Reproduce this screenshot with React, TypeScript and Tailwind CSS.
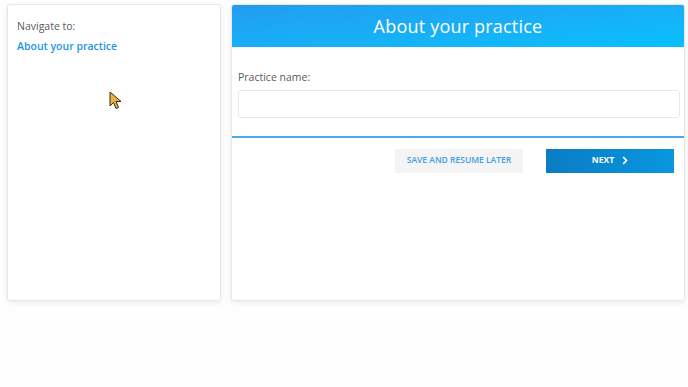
export default function App() {
  return (
    <div className="relative h-[387px] w-[688px] bg-[#fefefe] font-['Open_Sans',sans-serif]">
      <div className="flex gap-[10px] pl-[7px] pt-[4px]">
        <aside className="h-[297px] w-[214px] rounded-[3px] border border-[#e6e6e6] bg-white px-[9px] pt-[14px] shadow-[0_2px_6px_rgba(0,0,0,0.08)]">
          <p className="text-[10.5px] text-[#5a5a5a]">Navigate to:</p>
          <a className="mt-[4px] block text-[10.5px] font-semibold text-[#2196e8]">About your practice</a>
        </aside>

        <main className="h-[297px] w-[454px] overflow-hidden rounded-[3px] border border-[#e6e6e6] bg-white shadow-[0_2px_6px_rgba(0,0,0,0.08)]">
          <header className="flex h-[42px] items-center justify-center bg-gradient-to-br from-[#229cf0] to-[#05c0fd]">
            <h1 className="text-[18px] tracking-[0.2px] text-white">About your practice</h1>
          </header>

          <section className="pl-[6px] pr-[4px] pt-[23px] pb-[18px]">
            <label className="block text-[10.5px] text-[#5a5a5a]">Practice name:</label>
            <input className="mt-[4px] h-[28px] w-full rounded-[3px] border border-[#e8e8e8] bg-white" />
          </section>

          <div className="h-[2px] bg-[#48a9ec]" />

          <div className="flex justify-end gap-[23px] pr-[10px] pt-[11px]">
            <button className="h-[24px] w-[128px] bg-[#f4f4f4] text-[8.5px] font-semibold text-[#3d9ee6]">
              SAVE AND RESUME LATER
            </button>
            <button className="flex h-[24px] w-[128px] items-center justify-center gap-[8px] bg-gradient-to-r from-[#0a7cc4] to-[#0897e0] text-[8.5px] font-bold text-white">
              NEXT
              <svg width="6" height="9" viewBox="0 0 6 9">
                <path d="M1.2 1 L4.5 4.5 L1.2 8" stroke="white" strokeWidth="1.8" fill="none" />
              </svg>
            </button>
          </div>
        </main>
      </div>

      <svg className="absolute left-[109px] top-[91px]" width="14" height="19" viewBox="0 0 14 19">
        <path d="M1 1 L1 15 L4.5 11.5 L7 17.5 L9.5 16.5 L7 10.5 L12 10.5 Z" fill="#e8b33a" stroke="#3a2a10" strokeWidth="1" />
      </svg>
    </div>
  );
}
